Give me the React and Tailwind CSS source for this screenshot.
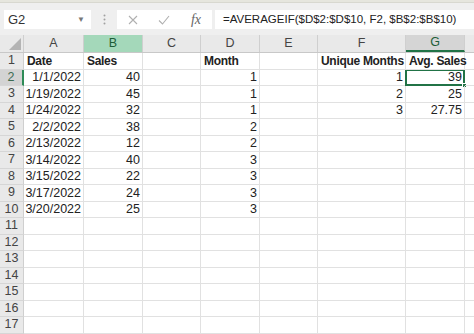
import React from "react";

const cols = [
  { k: "A", w: 60 },
  { k: "B", w: 59 },
  { k: "C", w: 58 },
  { k: "D", w: 59 },
  { k: "E", w: 58 },
  { k: "F", w: 88 },
  { k: "G", w: 59 },
  { k: "", w: 59 },
];

const data = {
  1: { A: ["Date", "b"], B: ["Sales", "b"], D: ["Month", "b"], F: ["Unique Months", "b"], G: ["Avg. Sales", "b"] },
  2: { A: ["1/1/2022"], B: ["40"], D: ["1"], F: ["1"], G: ["39"] },
  3: { A: ["1/19/2022"], B: ["45"], D: ["1"], F: ["2"], G: ["25"] },
  4: { A: ["1/24/2022"], B: ["32"], D: ["1"], F: ["3"], G: ["27.75"] },
  5: { A: ["2/2/2022"], B: ["38"], D: ["2"] },
  6: { A: ["2/13/2022"], B: ["12"], D: ["2"] },
  7: { A: ["3/14/2022"], B: ["40"], D: ["3"] },
  8: { A: ["3/15/2022"], B: ["22"], D: ["3"] },
  9: { A: ["3/17/2022"], B: ["24"], D: ["3"] },
  10: { A: ["3/20/2022"], B: ["25"], D: ["3"] },
};

const font = { fontFamily: '"Liberation Sans", Arial, sans-serif' };

export default function App() {
  const rows = Array.from({ length: 17 }, (_, i) => i + 1);
  return (
    <div className="w-[474px] h-[334px] overflow-hidden bg-white text-[#222]" style={font}>
      <div className="h-[3px] bg-[#e6e6de] border-b border-[#d8d8d0]" />
      <div className="h-[32px] bg-[#efefef] flex items-center pt-[1px]">
        <div className="ml-[4px] w-[87px] h-[19px] bg-white flex items-center justify-between pl-[4px] pr-[3px] text-[13px] text-[#333]">
          <span>G2</span>
          <span className="text-[#777] text-[8px] mr-[3px]">▼</span>
        </div>
        <div className="w-[26px] flex justify-center">
          <svg width="3" height="11" viewBox="0 0 3 11">
            <circle cx="1.5" cy="1.5" r="1" fill="#a0a0a0" />
            <circle cx="1.5" cy="5.5" r="1" fill="#a0a0a0" />
            <circle cx="1.5" cy="9.5" r="1" fill="#a0a0a0" />
          </svg>
        </div>
        <div className="w-[95px] h-[19px] bg-white flex items-center">
          <div className="w-[31px] flex justify-center">
            <svg width="10" height="10" viewBox="0 0 10 10">
              <path d="M1 1L9 9M9 1L1 9" stroke="#b0b0b0" strokeWidth="1.1" />
            </svg>
          </div>
          <div className="w-[32px] flex justify-center">
            <svg width="12" height="10" viewBox="0 0 12 10">
              <path d="M1 5.5L4.5 9L11 1" stroke="#b0b0b0" strokeWidth="1.1" fill="none" />
            </svg>
          </div>
          <div className="w-[32px] flex justify-center text-[#666] italic text-[14px]" style={{ fontFamily: '"Liberation Serif", serif' }}>
            fx
          </div>
        </div>
        <div className="ml-[3px] flex-1 h-[19px] bg-white flex items-center pl-[8px] text-[11.5px] text-[#222] whitespace-nowrap">
          =AVERAGEIF($D$2:$D$10, F2, $B$2:$B$10)
        </div>
      </div>
      {/* column headers */}
      <div className="flex h-[18px] bg-[#e9e9e9] border-b border-[#c8c8c8]">
        <div className="w-[24px] shrink-0 relative border-r border-[#cfcfcf]">
          <svg className="absolute right-[2px] bottom-[2px]" width="12" height="12" viewBox="0 0 12 12">
            <path d="M12 0L12 12L0 12Z" fill="#b4b4b4" />
          </svg>
        </div>
        {cols.map((c, i) => (
          <div
            key={i}
            style={{ width: c.w }}
            className={
              "shrink-0 flex items-center justify-center text-[12.5px] border-r border-[#cfcfcf] " +
              (c.k === "B"
                ? "bg-[#a4d8ba] text-[#1d5e38]"
                : c.k === "G"
                ? "bg-[#d5d5d5] text-[#1d5e38] border-b-2 border-b-[#217346]"
                : "text-[#444]")
            }
          >
            {c.k}
          </div>
        ))}
      </div>
      {rows.map((r) => (
        <div key={r} className="flex h-[16.5px]">
          <div
            className={
              "w-[24px] shrink-0 flex items-center justify-center text-[12.5px] border-b border-[#d6d6d6] " +
              (r === 2 ? "bg-[#d3d3d3] text-[#3d6b52] border-r-2 border-r-[#2e8b57]" : "bg-[#e9e9e9] text-[#444] border-r border-r-[#cfcfcf]")
            }
          >
            {r}
          </div>
          {cols.map((c, i) => {
            const cell = data[r] && c.k && data[r][c.k];
            const bold = cell && cell[1] === "b";
            const active = r === 2 && c.k === "G";
            return (
              <div
                key={i}
                style={{ width: c.w }}
                className={
                  "shrink-0 relative flex items-center leading-none whitespace-nowrap border-r border-b border-[#e1e1e1] " +
                  (bold
                    ? "font-bold text-[12px] tracking-[-0.3px] justify-start pl-[3px] z-10 "
                    : "text-[12.5px] justify-end pr-[2px] ")
                }
              >
                {cell ? cell[0] : ""}
                {active && (
                  <div className="absolute left-[-1px] top-[-1px] right-[-1px] bottom-[-1px] border-2 border-[#217346]">
                    <div className="absolute right-[-4px] bottom-[-4px] w-[5px] h-[5px] bg-[#217346] border border-white" />
                  </div>
                )}
              </div>
            );
          })}
        </div>
      ))}
    </div>
  );
}
